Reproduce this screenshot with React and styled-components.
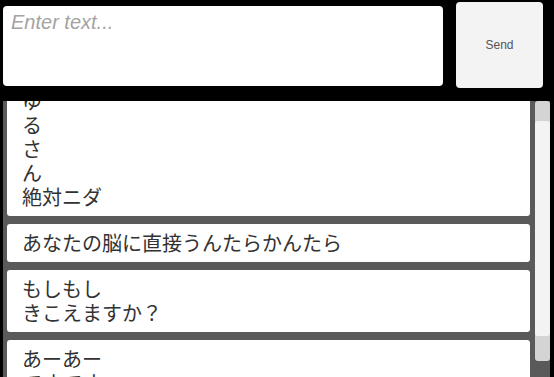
import React from "react";
import styled, { createGlobalStyle } from "styled-components";

const GlobalStyle = createGlobalStyle`
  html, body {
    margin: 0;
    padding: 0;
    background: #000;
    height: 100%;
    overflow: hidden;
  }
  #root {
    height: 100%;
  }
`;

const Screen = styled.div`
  display: flex;
  flex-direction: column;
  height: 100vh;
  background: #000;
`;

const InputBar = styled.div`
  display: flex;
  align-items: flex-start;
  height: 101px;
  flex-shrink: 0;
`;

const TextBox = styled.textarea`
  box-sizing: border-box;
  width: 440px;
  height: 80px;
  margin: 6px 0 0 3px;
  padding: 5px 8px;
  border: none;
  border-radius: 4px;
  background: #fff;
  resize: none;
  outline: none;
  font-family: "Liberation Sans", Arial, sans-serif;
  font-size: 20px;
  color: #323232;

  &::placeholder {
    color: #a3a3a3;
    font-style: italic;
  }
`;

const SendButton = styled.button`
  box-sizing: border-box;
  width: 87px;
  height: 86px;
  margin: 2px 0 0 13px;
  border: none;
  border-radius: 4px;
  background: #f3f3f3;
  color: #555;
  font-family: "Liberation Sans", Arial, sans-serif;
  font-size: 12px;
  padding: 0;
`;

const Panel = styled.div`
  flex: 1;
  display: flex;
  margin: 0 4px 0 3px;
  background: #5a5a5a;
  overflow: hidden;
`;

const MessageList = styled.div`
  flex: 1;
  overflow: hidden;
  padding: 0 5px 0 4px;
`;

const Stack = styled.div`
  display: flex;
  flex-direction: column;
  gap: 8px;
  margin-top: ${(p) => -p.$offset}px;
`;

const Card = styled.div`
  background: #fff;
  border-radius: 3px;
  padding: 7px 15px;
  font-family: "Noto Sans CJK JP", "Noto Sans", sans-serif;
  font-size: 20px;
  line-height: 24px;
  color: #323232;
  white-space: pre-line;
`;

const ScrollColumn = styled.div`
  width: 15px;
  display: flex;
  flex-direction: column;
`;

const Track = styled.div`
  height: 260px;
  background: #d4d4d4;
  border-radius: 3px;
  padding-top: ${(p) => p.$top}px;
  box-sizing: border-box;
`;

const Thumb = styled.div`
  height: ${(p) => p.$size}px;
  background: #f3f3f3;
  border-radius: 3px;
`;

const messages = [
  "ゆ\nる\nさ\nん\n絶対ニダ",
  "あなたの脳に直接うんたらかんたら",
  "もしもし\nきこえますか？",
  "あーあー\nてすてす",
];

export default function App() {
  return (
    <>
      <GlobalStyle />
      <Screen>
        <InputBar>
          <TextBox placeholder="Enter text..." />
          <SendButton>Send</SendButton>
        </InputBar>
        <Panel>
          <MessageList>
            <Stack $offset={19}>
              {messages.map((m, i) => (
                <Card key={i}>{m}</Card>
              ))}
            </Stack>
          </MessageList>
          <ScrollColumn>
            <Track $top={20}>
              <Thumb $size={215} />
            </Track>
          </ScrollColumn>
        </Panel>
      </Screen>
    </>
  );
}
